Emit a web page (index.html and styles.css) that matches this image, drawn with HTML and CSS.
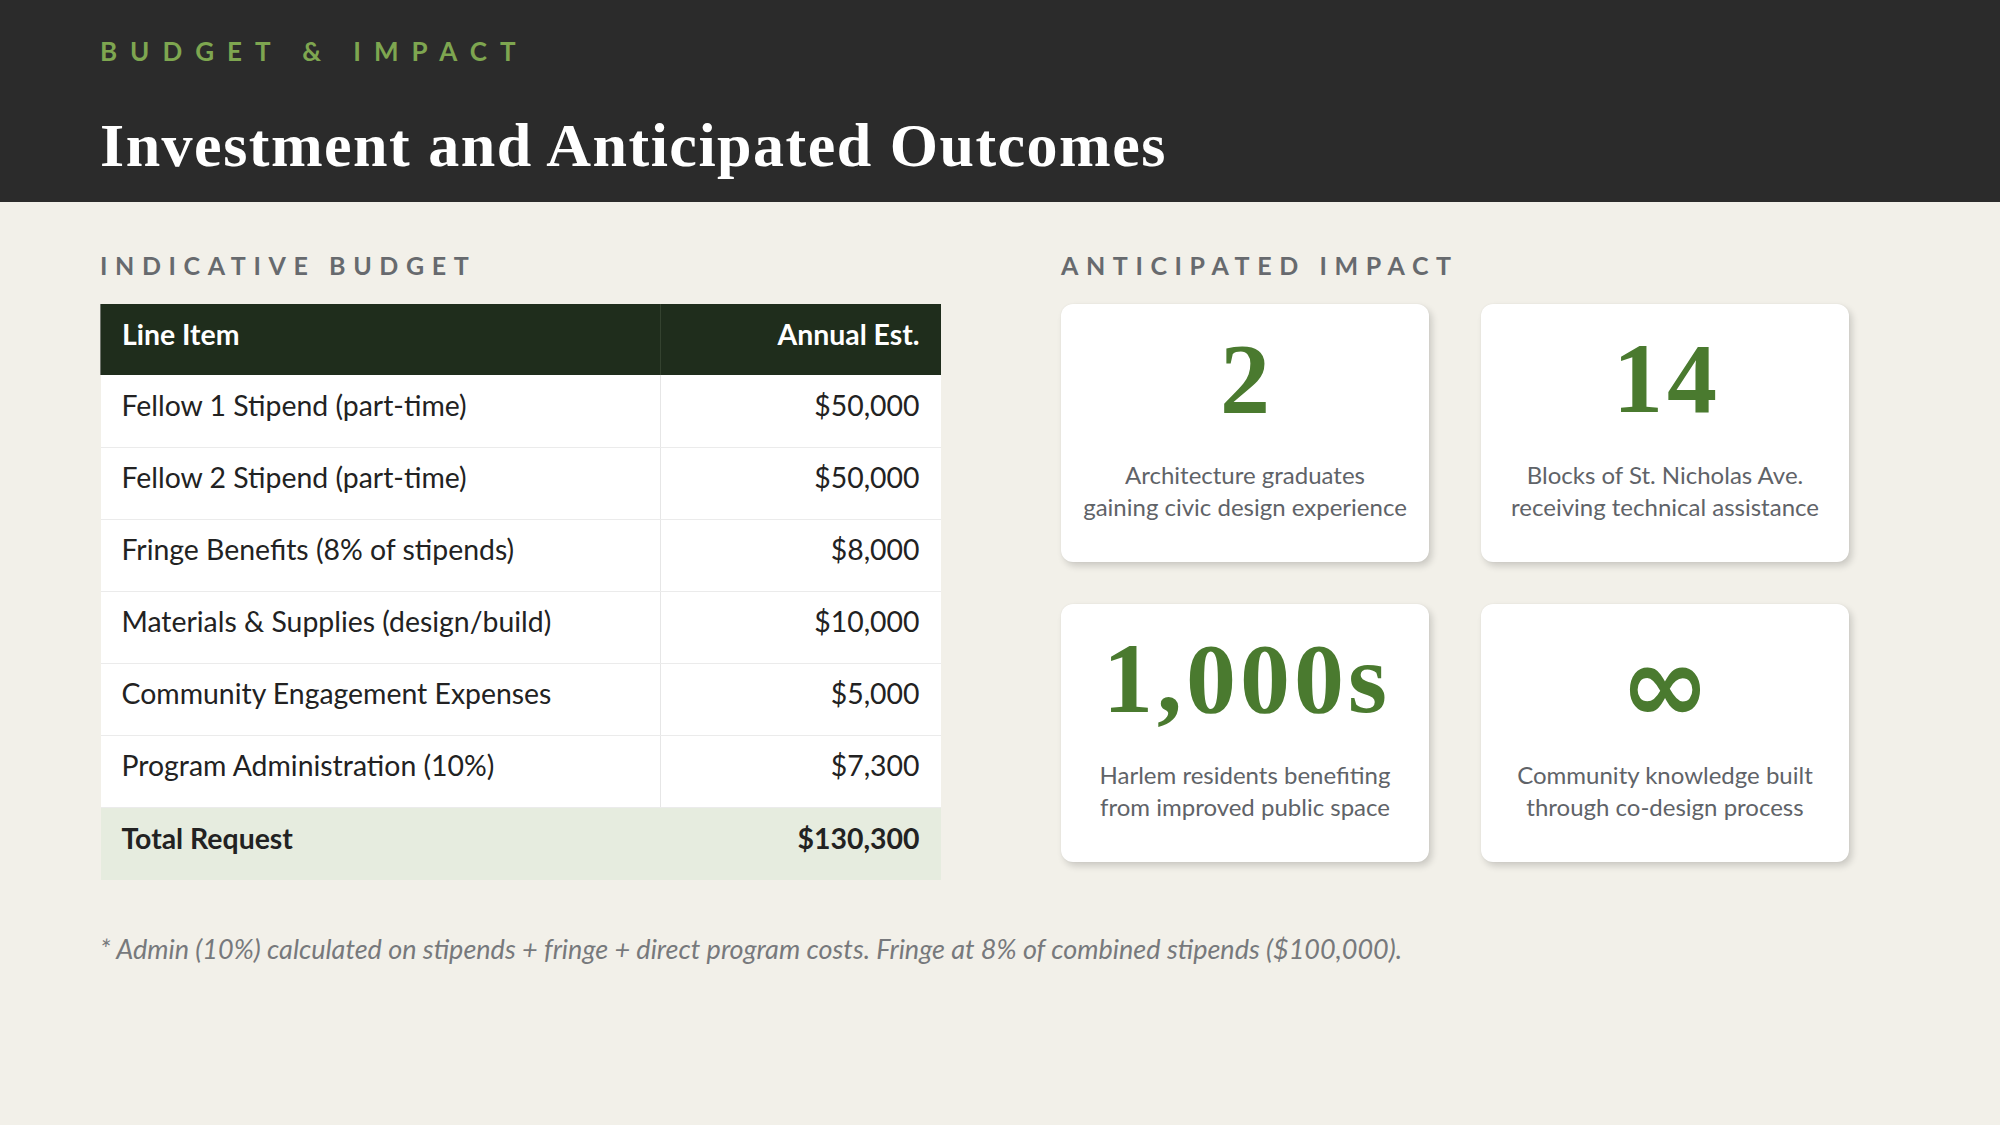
FILE: index.html
```html
<!DOCTYPE html>
<html lang="en">
<head>
<meta charset="utf-8">
<title>Budget &amp; Impact</title>
<link rel="stylesheet" href="styles.css">
</head>
<body>
<div class="slide">
  <header class="hero">
    <div class="eyebrow">BUDGET &amp; IMPACT</div>
    <h1 class="title">Investment and Anticipated Outcomes</h1>
  </header>
  <main class="content">
    <div class="columns">
      <section class="budget">
        <h2 class="label">INDICATIVE BUDGET</h2>
        <table class="table">
          <thead>
            <tr><th class="c-item">Line Item</th><th class="c-amt">Annual Est.</th></tr>
          </thead>
          <tbody>
            <tr><td class="c-item">Fellow 1 Stipend (part-time)</td><td class="c-amt">$50,000</td></tr>
            <tr><td class="c-item">Fellow 2 Stipend (part-time)</td><td class="c-amt">$50,000</td></tr>
            <tr><td class="c-item">Fringe Benefits (8% of stipends)</td><td class="c-amt">$8,000</td></tr>
            <tr><td class="c-item">Materials &amp; Supplies (design/build)</td><td class="c-amt">$10,000</td></tr>
            <tr><td class="c-item">Community Engagement Expenses</td><td class="c-amt">$5,000</td></tr>
            <tr><td class="c-item">Program Administration (10%)</td><td class="c-amt">$7,300</td></tr>
            <tr class="total"><td class="c-item">Total Request</td><td class="c-amt">$130,300</td></tr>
          </tbody>
        </table>
      </section>
      <section class="impact">
        <h2 class="label">ANTICIPATED IMPACT</h2>
        <div class="cards">
          <div class="card"><div class="num">2</div><p class="desc">Architecture graduates<br>gaining civic design experience</p></div>
          <div class="card"><div class="num">14</div><p class="desc">Blocks of St. Nicholas Ave.<br>receiving technical assistance</p></div>
          <div class="card"><div class="num">1,000s</div><p class="desc">Harlem residents benefiting<br>from improved public space</p></div>
          <div class="card"><div class="num inf">∞</div><p class="desc">Community knowledge built<br>through co-design process</p></div>
        </div>
      </section>
    </div>
    <p class="footnote">* Admin (10%) calculated on stipends + fringe + direct program costs. Fringe at 8% of combined stipends ($100,000).</p>
  </main>
</div>
</body>
</html>
```
FILE: styles.css
```css
* { box-sizing: border-box; }
html, body { margin: 0; padding: 0; }
body {
  width: 2000px;
  height: 1125px;
  overflow: hidden;
  background: #f2f0e9;
  font-family: Lato, "Open Sans", sans-serif;
  color: #222;
}
.slide { width: 2000px; height: 1125px; }

.hero {
  height: 202px;
  background: #2b2b2b;
  padding: 38px 100px 0;
}
.eyebrow {
  font-size: 26px;
  line-height: 26px;
  font-weight: 700;
  letter-spacing: 13px;
  color: #7ea650;
}
.title {
  margin: 50px 0 0;
  font-family: "Liberation Serif", serif;
  font-weight: 700;
  font-size: 62px;
  line-height: 62px;
  color: #ffffff;
  letter-spacing: 1.5px;
}

.content { padding: 51px 100px 0; }
.columns { display: flex; gap: 121px; align-items: flex-start; }
.budget { width: 840px; }
.impact { width: 789px; }

.label {
  margin: 0 0 26px;
  font-size: 25px;
  line-height: 25px;
  font-weight: 700;
  letter-spacing: 7.6px;
  color: #676a6e;
}

.table {
  width: 840px;
  border-collapse: collapse;
  table-layout: fixed;
  font-size: 28.4px;
}
.table .c-item { width: 560px; text-align: left; padding: 0 21px 12px; }
.table .c-amt { width: 280px; text-align: right; padding: 0 21px 12px; }
.table thead th {
  height: 71px;
  background: #1f2d1c;
  color: #ffffff;
  font-weight: 700;
  vertical-align: middle;
}
.table thead th.c-item { border-left: 1px solid #6f746c; }
.table thead th.c-amt { border-left: 1px solid #34422f; }
.table tbody td {
  height: 72px;
  background: #ffffff;
  border-bottom: 1px solid #ebebeb;
  color: #222;
  font-weight: 400;
  vertical-align: middle;
}
.table tbody td.c-amt { border-left: 1px solid #e6e6e6; }
.table tbody tr.total td {
  height: 73px;
  background: #e6ecdf;
  border: none;
  font-weight: 700;
}

.cards {
  display: grid;
  grid-template-columns: 368px 368px;
  grid-auto-rows: 258px;
  column-gap: 52px;
  row-gap: 42px;
}
.card {
  background: #ffffff;
  border-radius: 12px;
  box-shadow: 3px 4px 7px rgba(0, 0, 0, 0.16), 0 0 2px rgba(0, 0, 0, 0.06);
  padding: 26px 6px 0;
  text-align: center;
}
.num {
  font-family: "Liberation Serif", serif;
  font-weight: 700;
  font-size: 100px;
  line-height: 98px;
  height: 98px;
  letter-spacing: 4px;
  padding-left: 4px;
  color: #4a7a2f;
}
.num.inf {
  font-family: "DejaVu Sans", sans-serif;
  font-size: 108px;
  line-height: 98px;
  letter-spacing: 0;
  padding: 6px 0 0;
  overflow: visible;
}
.desc {
  margin: 31px 0 0;
  font-size: 24px;
  line-height: 32px;
  color: #5f6368;
}

.footnote {
  margin: 55px 0 0;
  font-size: 27px;
  line-height: 27px;
  font-style: italic;
  color: #77797c;
}
```
